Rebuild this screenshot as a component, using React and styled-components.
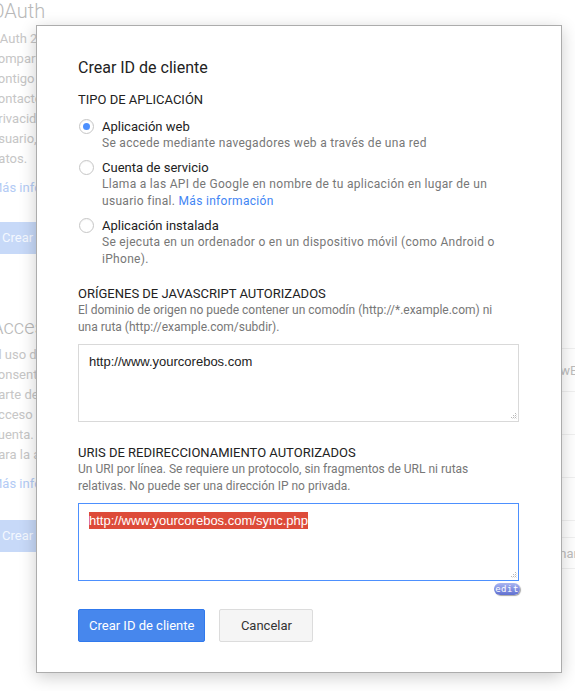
import styled, { createGlobalStyle } from 'styled-components';

const GlobalStyle = createGlobalStyle`
  html, body {
    margin: 0;
    padding: 0;
    background: #ffffff;
    overflow: hidden;
  }
  body {
    font-family: Roboto, "Liberation Sans", Arial, sans-serif;
  }
`;

const appTypes = [
  {
    id: 'web',
    label: 'Aplicación web',
    lines: ['Se accede mediante navegadores web a través de una red'],
    checked: true
  },
  {
    id: 'service',
    label: 'Cuenta de servicio',
    lines: ['Llama a las API de Google en nombre de tu aplicación en lugar de un', 'usuario final.'],
    link: 'Más información'
  },
  {
    id: 'installed',
    label: 'Aplicación instalada',
    lines: ['Se ejecuta en un ordenador o en un dispositivo móvil (como Android o', 'iPhone).']
  }
];

const oauthLines = [
  'OAuth 2.0 permite a los usuarios',
  'compartir datos específicos',
  'contigo (por ejemplo, listas de',
  'contactos) y mantener la',
  'privacidad de sus nombres de',
  'usuario, contraseñas y otros',
  'datos.'
];

const accessLines = [
  'El uso de las API de Google',
  'consentimiento del usuario por',
  'parte de tu aplicación para el',
  'acceso a los datos de su',
  'cuenta. Crea un ID de cliente',
  'para la autenticación.'
];

// faded page that sits behind the dialog
function BackgroundPage() {
  return (
    <Backdrop>
      <LeftColumn>
        <BgHeading>OAuth</BgHeading>
        <BgText>
          {oauthLines.map(line => <div key={line}>{line}</div>)}
        </BgText>
        <BgLink>Más información</BgLink>
        <BgButton $top={24}>Crear ID de cliente</BgButton>

        <BgHeading $top={62}>Acceso a la API</BgHeading>
        <BgText>
          {accessLines.map(line => <div key={line}>{line}</div>)}
        </BgText>
        <BgLink>Más información</BgLink>
        <BgButton $top={26}>Crear clave nueva</BgButton>
      </LeftColumn>

      <RightColumn>
        <BgRow $height={43}><BgCell>0wE8fQ2hk</BgCell></BgRow>
        <BgRow $height={43} />
        <BgRow $height={43} />
        <BgRow $height={43} />
        <BgRow $height={17} />
        <BgRow $height={31}><BgCell $shift={-22}>Eliminar</BgCell></BgRow>
        <BgRow $height={40} />
      </RightColumn>
    </Backdrop>
  );
}

function ResizeGrip() {
  return (
    <Grip width="8" height="8" viewBox="0 0 8 8">
      {[[6, 1], [4, 3], [6, 3], [2, 5], [4, 5], [6, 5]].map(([x, y]) => (
        <rect key={`${x}-${y}`} x={x} y={y} width="1" height="1" fill="#b8b8b8" />
      ))}
      {[[7, 2], [5, 4], [7, 4], [3, 6], [5, 6], [7, 6]].map(([x, y]) => (
        <rect key={`s${x}-${y}`} x={x} y={y} width="1" height="1" fill="#e4e4e4" />
      ))}
    </Grip>
  );
}

export default function App() {
  return (
    <Screen>
      <GlobalStyle />
      <BackgroundPage />

      <Dialog>
        <Title>Crear ID de cliente</Title>

        <SectionLabel $top={14}>Tipo de aplicación</SectionLabel>
        <RadioList>
          {appTypes.map(type => (
            <RadioRow key={type.id}>
              <Radio $checked={type.checked} />
              <RadioBody>
                <RadioLabel>{type.label}</RadioLabel>
                {type.lines.map((line, i) => (
                  <Description key={line} $spaced>
                    {line}
                    {type.link && i === type.lines.length - 1 && <> <Link>{type.link}</Link></>}
                  </Description>
                ))}
              </RadioBody>
            </RadioRow>
          ))}
        </RadioList>

        <SectionLabel $top={18}>Orígenes de JavaScript autorizados</SectionLabel>
        <Description>El dominio de origen no puede contener un comodín (http://*.example.com) ni</Description>
        <Description>una ruta (http://example.com/subdir).</Description>
        <TextArea>
          http://www.yourcorebos.com
          <ResizeGrip />
        </TextArea>

        <SectionLabel $top={23}>URIs de redireccionamiento autorizados</SectionLabel>
        <Description>Un URI por línea. Se requiere un protocolo, sin fragmentos de URL ni rutas</Description>
        <Description>relativas. No puede ser una dirección IP no privada.</Description>
        <TextArea $focused>
          <Selected>http://www.yourcorebos.com/sync.php</Selected>
          <ResizeGrip />
          <EditBadge>edit</EditBadge>
        </TextArea>

        <Actions>
          <Button $primary>Crear ID de cliente</Button>
          <Button $width={94}>Cancelar</Button>
        </Actions>
      </Dialog>
    </Screen>
  );
}

const Screen = styled.div`
  position: relative;
  width: 575px;
  height: 691px;
  overflow: hidden;
  background: #ffffff;
`;

const Backdrop = styled.div`
  display: grid;
  grid-template-columns: 280px 1fr;
  margin-left: -9px;
  width: 600px;
  font-size: 13px;
  color: #c6c6c6;
`;

const LeftColumn = styled.div`
  display: flex;
  flex-direction: column;
  align-items: flex-start;
`;

const BgHeading = styled.div`
  margin-top: ${props => props.$top || 0}px;
  font-size: 20px;
  line-height: 22px;
  font-weight: 300;
  color: #b9b9b9;
  white-space: nowrap;
`;

const BgText = styled.div`
  margin-top: 7px;
  line-height: 20px;
  white-space: nowrap;
`;

const BgLink = styled.div`
  margin-top: 9px;
  line-height: 20px;
  color: #b3cbf5;
`;

const BgButton = styled.div`
  margin-top: ${props => props.$top}px;
  height: 32px;
  line-height: 32px;
  padding: 0 11px;
  background: #c7d9f8;
  color: #f4f8ff;
  white-space: nowrap;
`;

const RightColumn = styled.div`
  display: flex;
  flex-direction: column;
  padding-top: 348px;
`;

const BgRow = styled.div`
  height: ${props => props.$height}px;
  border-top: 1px solid #f0f0f0;
  box-sizing: border-box;
  display: flex;
  align-items: center;
`;

const BgCell = styled.span`
  margin-left: ${props => 282 + (props.$shift || 0)}px;
  white-space: nowrap;
  color: #bdbdbd;
`;

const Dialog = styled.div`
  position: absolute;
  top: 25px;
  left: 36px;
  width: 526px;
  box-sizing: border-box;
  padding: 32px 42px 30px 41px;
  background: #ffffff;
  border: 1px solid #acacac;
  box-shadow: 0 4px 16px rgba(0, 0, 0, 0.2);
  color: #222222;
`;

const Title = styled.h1`
  margin: 0;
  font-size: 16px;
  line-height: 20px;
  font-weight: 400;
  color: #222222;
`;

const SectionLabel = styled.div`
  margin-top: ${props => props.$top}px;
  font-size: 13px;
  line-height: 16px;
  text-transform: uppercase;
  color: #222222;
`;

const RadioList = styled.div`
  margin-top: 11px;
  display: flex;
  flex-direction: column;
  gap: 8px;
`;

const RadioRow = styled.div`
  display: flex;
  align-items: flex-start;
  gap: 8px;
`;

const Radio = styled.span`
  position: relative;
  flex: none;
  width: 15px;
  height: 15px;
  margin-left: 1px;
  box-sizing: border-box;
  border-radius: 50%;
  border: 1px solid #c6c6c6;
  background: #ffffff;
  box-shadow: inset 0 1px 1px rgba(0, 0, 0, 0.04);

  &::after {
    content: '';
    display: ${props => props.$checked ? 'block' : 'none'};
    position: absolute;
    top: 3px;
    left: 3px;
    width: 7px;
    height: 7px;
    border-radius: 50%;
    background: #4d90fe;
  }
`;

const RadioBody = styled.div`
  display: flex;
  flex-direction: column;
`;

const RadioLabel = styled.div`
  font-size: 13px;
  line-height: 16px;
  color: #222222;
`;

const Description = styled.div`
  font-size: 12px;
  line-height: 17px;
  letter-spacing: ${props => props.$spaced ? '0.3px' : '0'};
  color: #777777;
  white-space: nowrap;
`;

const Link = styled.span`
  color: #4285f4;
`;

const TextArea = styled.div`
  position: relative;
  margin-top: 8px;
  height: 78px;
  box-sizing: border-box;
  padding: 9px 10px 8px;
  border: 1px solid ${props => props.$focused ? '#4d90fe' : '#d9d9d9'};
  font-family: "Liberation Sans", Arial, sans-serif;
  font-size: 13px;
  line-height: 16px;
  color: #222222;
`;

const Selected = styled.span`
  background: #dd4b39;
  color: #ffffff;
  padding: 1px 0;
`;

const Grip = styled.svg`
  position: absolute;
  right: 1px;
  bottom: 1px;
`;

const EditBadge = styled.span`
  position: absolute;
  right: -2px;
  bottom: -15px;
  width: 26px;
  height: 12px;
  border-radius: 6px;
  background: linear-gradient(#a9b6f2, #5f6fd0);
  box-shadow: 1px 1px 1px rgba(0, 0, 0, 0.35);
  color: #ffffff;
  font-family: "DejaVu Sans Mono", monospace;
  font-size: 9px;
  line-height: 12px;
  text-align: center;
  letter-spacing: 0.5px;
`;

const Actions = styled.div`
  margin-top: 28px;
  display: flex;
  gap: 14px;
`;

const Button = styled.button`
  height: 33px;
  ${props => props.$width ? `width: ${props.$width}px;` : 'padding: 0 10px;'}
  box-sizing: border-box;
  border-radius: 2px;
  font-family: Roboto, "Liberation Sans", Arial, sans-serif;
  font-size: 13px;
  background: ${props => props.$primary ? '#4787ed' : '#f5f5f5'};
  border: 1px solid ${props => props.$primary ? '#3079ed' : '#dcdcdc'};
  color: ${props => props.$primary ? '#ffffff' : '#333333'};
`;
